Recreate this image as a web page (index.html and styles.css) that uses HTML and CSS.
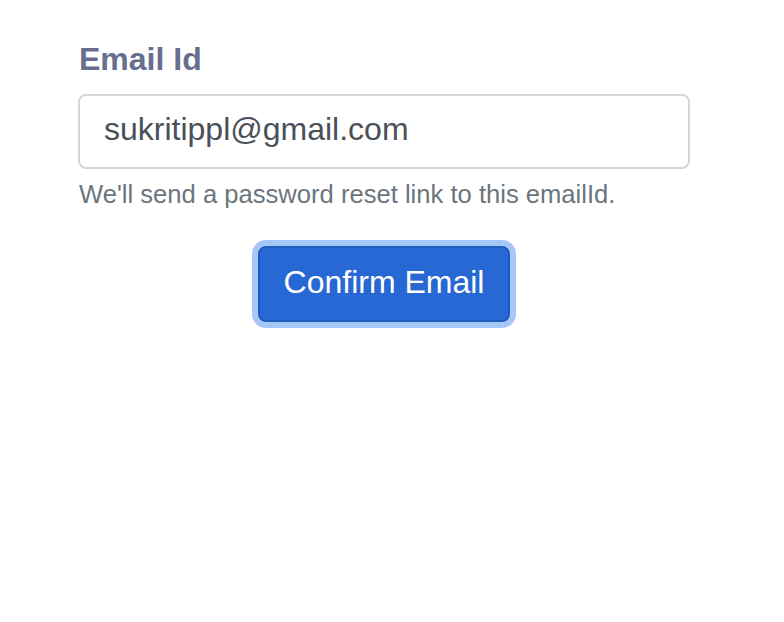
FILE: index.html
```html
<!DOCTYPE html>
<html lang="en">
<head>
<meta charset="utf-8">
<title>Reset password</title>
<link rel="stylesheet" href="styles.css">
</head>
<body>
<form class="form">
  <div class="field">
    <label class="label" for="email">Email Id</label>
    <input class="input" id="email" type="email" value="sukritippl@gmail.com">
    <small class="help">We'll send a password reset link to this emailId.</small>
  </div>
  <div class="actions">
    <button type="button" class="btn">Confirm Email</button>
  </div>
</form>
</body>
</html>
```
FILE: styles.css
```css
* { box-sizing: border-box; }
html, body { margin: 0; padding: 0; background: #fff; }
body {
  font-family: "Liberation Sans", Arial, sans-serif;
  width: 768px;
  height: 622px;
}
.form {
  width: 612px;
  margin: 0 auto;
  padding-top: 35px;
}
.field {
  display: flex;
  flex-direction: column;
}
.label {
  font-size: 32px;
  font-weight: bold;
  line-height: 48px;
  color: #686e8e;
  margin-bottom: 11px;
  padding-left: 1px;
}
.input {
  height: 75px;
  width: 100%;
  border: 2px solid #d4d6da;
  border-radius: 8px;
  padding: 0 24px 4px;
  font-family: "Liberation Sans", Arial, sans-serif;
  font-size: 32px;
  color: #495057;
  background: #fff;
  outline: none;
}
.help {
  margin-top: 6px;
  font-size: 25.6px;
  line-height: 38px;
  color: #6c757d;
  padding-left: 1px;
}
.actions {
  display: flex;
  justify-content: center;
  margin-top: 33px;
}
.btn {
  font-family: "Liberation Sans", Arial, sans-serif;
  font-size: 32px;
  line-height: 48px;
  padding: 10px 24px 14px;
  border: 2px solid #1f5cbf;
  border-radius: 8px;
  background: #2768d4;
  color: #fff;
  box-shadow: 0 0 0 6px #a3c7f6;
  cursor: pointer;
}
```
